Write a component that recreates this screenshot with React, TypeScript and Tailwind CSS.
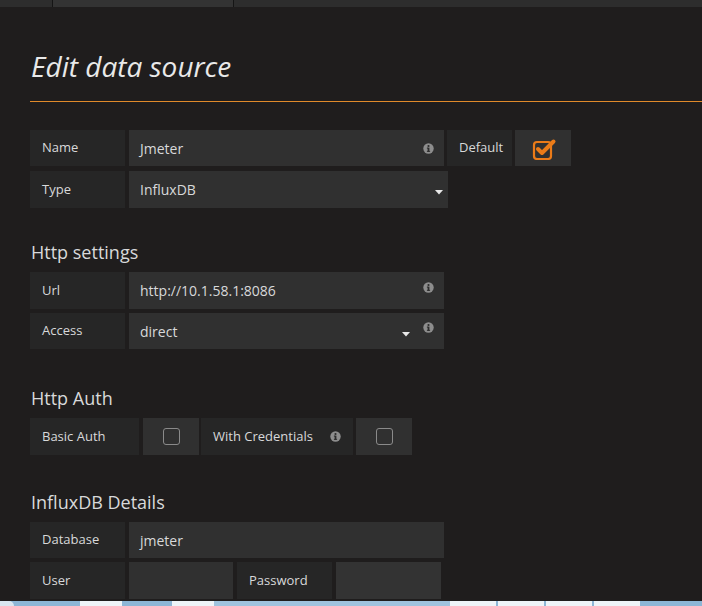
import React from "react";

function InfoIcon() {
  return (
    <svg width="11" height="11" viewBox="0 0 11 11" className="shrink-0">
      <circle cx="5.5" cy="5.5" r="5.2" fill="#8d8d8d" />
      <circle cx="5.5" cy="3" r="1.1" fill="#2c2c2c" />
      <rect x="4.6" y="4.6" width="1.8" height="4.2" fill="#2c2c2c" />
      <rect x="3.9" y="4.6" width="1.2" height="1" fill="#2c2c2c" />
      <rect x="3.9" y="7.9" width="3.2" height="0.9" fill="#2c2c2c" />
    </svg>
  );
}

function Caret() {
  return (
    <svg width="8" height="5" viewBox="0 0 8 5" className="shrink-0">
      <path d="M0 0 L8 0 L4 4.5 Z" fill="#e8e8e8" />
    </svg>
  );
}

function Label({ text, w, info }: { text: string; w: string; info?: boolean }) {
  return (
    <div className={`${w} h-full bg-[#262626] flex items-center justify-between pl-3 pr-[12px] text-[13px] text-[#d8d9da]`}>
      <span>{text}</span>
      {info && <InfoIcon />}
    </div>
  );
}

function Check({ checked }: { checked?: boolean }) {
  return (
    <div className="w-[56px] h-full bg-[#303030] flex items-center justify-center">
      {checked ? (
        <svg width="26" height="24" viewBox="0 0 26 24" className="ml-[2px] -mt-[1px]">
          <rect x="3" y="6" width="17" height="17" rx="3" fill="none" stroke="#eb7b18" strokeWidth="2.2" />
          <path d="M7 13 L11 17 L22.5 5.5" fill="none" stroke="#eb7b18" strokeWidth="4" strokeLinecap="round" strokeLinejoin="round" />
        </svg>
      ) : (
        <div className="w-[17px] h-[17px] rounded-[3px] border-[1.5px] border-[#8a8a8a]" />
      )}
    </div>
  );
}

function Heading({ children, mt }: { children: React.ReactNode; mt: string }) {
  return (
    <h3 className={`${mt} shrink-0 h-6 leading-6 pl-px text-[18px] text-[#d8d9da]`}>{children}</h3>
  );
}

export default function App() {
  return (
    <div
      className="w-[702px] h-[606px] overflow-hidden bg-[#1f1d1d] flex flex-col"
      style={{ fontFamily: '"Open Sans", "Noto Sans", sans-serif' }}
    >
      {/* top tab strip */}
      <div className="h-[7px] flex bg-[#2d2d2d] shrink-0">
        <div className="w-[53px] border-r border-[#151515]" />
        <div className="w-[181px] border-r border-[#151515] bg-[#333333]" />
        <div className="flex-1" />
      </div>

      <div className="pl-[30px] flex-1 min-h-0 flex flex-col">
        <h1 className="mt-[41px] shrink-0 h-9 leading-9 pl-px text-[28px] font-normal italic text-[#e9e9e9]">
          Edit data source
        </h1>
        <div className="mt-[17px] shrink-0 h-0 border-t border-t-[#e08a2a]" />

        <div className="mt-[28px] shrink-0 flex flex-col gap-[5px]">
          <div className="flex h-9">
            <Label text="Name" w="w-[95px]" />
            <div className="ml-[4px] w-[315px] h-full bg-[#303030] flex items-center justify-between pl-[11px] pr-[10px] text-[14px] text-[#d8d9da]">
              <span>Jmeter</span>
              <InfoIcon />
            </div>
            <div className="ml-[3px] w-[65px] h-full bg-[#262626] flex items-center pl-3 text-[13px] text-[#d8d9da]">
              Default
            </div>
            <div className="ml-[3px] h-full">
              <Check checked />
            </div>
          </div>
          <div className="flex h-[37px]">
            <Label text="Type" w="w-[95px]" />
            <div className="ml-[4px] w-[319px] h-full bg-[#303030] flex items-center justify-between pl-[11px] pr-[5px] text-[14px] text-[#d8d9da]">
              <span>InfluxDB</span>
              <span className="mt-[6px]"><Caret /></span>
            </div>
          </div>
        </div>

        <Heading mt="mt-[32px]">Http settings</Heading>
        <div className="mt-[8px] shrink-0 flex flex-col gap-[4px]">
          <div className="flex h-[37px]">
            <Label text="Url" w="w-[95px]" />
            <div className="ml-[4px] w-[315px] h-full bg-[#303030] flex items-center justify-between pl-[11px] pr-[10px] text-[14px] text-[#d8d9da]">
              <span>http://10.1.58.1:8086</span>
              <span className="-mt-[6px]"><InfoIcon /></span>
            </div>
          </div>
          <div className="flex h-[36px]">
            <Label text="Access" w="w-[95px]" />
            <div className="ml-[4px] w-[315px] h-full bg-[#303030] flex items-center pl-[11px] pr-[10px] text-[14px] text-[#d8d9da]">
              <span className="flex-1">direct</span>
              <span className="mt-[6px]"><Caret /></span>
              <span className="ml-[13px] -mt-[8px]"><InfoIcon /></span>
            </div>
          </div>
        </div>

        <Heading mt="mt-[37px]">Http Auth</Heading>
        <div className="mt-[8px] shrink-0 flex h-[37px]">
          <Label text="Basic Auth" w="w-[109px]" />
          <div className="ml-[4px] h-full">
            <Check />
          </div>
          <div className="ml-[2px] h-full">
            <Label text="With Credentials" w="w-[152px]" info />
          </div>
          <div className="ml-[3px] h-full">
            <Check />
          </div>
        </div>

        <Heading mt="mt-[35px]">InfluxDB Details</Heading>
        <div className="mt-[8px] shrink-0 flex flex-col gap-[4px]">
          <div className="flex h-[36px]">
            <Label text="Database" w="w-[95px]" />
            <div className="ml-[4px] w-[315px] h-full bg-[#303030] flex items-center pl-[11px] text-[14px] text-[#d8d9da]">
              jmeter
            </div>
          </div>
          <div className="flex h-[37px]">
            <Label text="User" w="w-[95px]" />
            <div className="ml-[4px] w-[104px] h-full bg-[#303030]" />
            <div className="ml-[4px] h-full">
              <Label text="Password" w="w-[95px]" />
            </div>
            <div className="ml-[4px] w-[105px] h-full bg-[#333333]" />
          </div>
        </div>
      </div>

      {/* taskbar edge */}
      <div className="h-[5px] shrink-0 flex bg-[#8db6d6]">
        <div className="w-[14px] bg-[#d9e6f0] rounded-tr-full" />
        <div className="w-[66px]" />
        <div className="w-[42px] bg-[#eef4f8]" />
        <div className="w-[50px]" />
        <div className="w-[42px] bg-[#eef4f8]" />
        <div className="w-[236px] bg-[#9fc3de]" />
        <div className="w-[46px] bg-[#eef4f8]" />
        <div className="w-[2px]" />
        <div className="w-[46px] bg-[#eef4f8]" />
        <div className="w-[2px]" />
        <div className="w-[46px] bg-[#eef4f8]" />
        <div className="w-[2px]" />
        <div className="w-[46px] bg-[#eef4f8]" />
        <div className="flex-1" />
      </div>
    </div>
  );
}
